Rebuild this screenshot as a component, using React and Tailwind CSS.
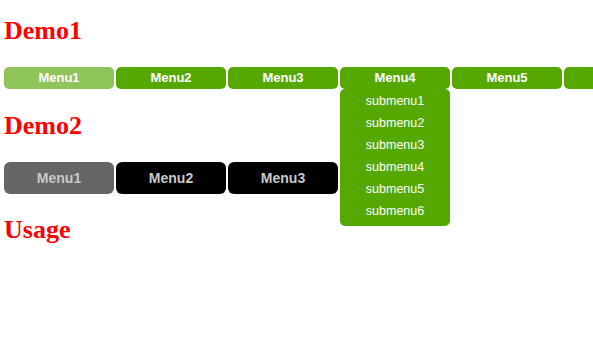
import React from 'react';

const demo1 = ['Menu1', 'Menu2', 'Menu3', 'Menu4', 'Menu5', 'Menu6'];
const demo2 = ['Menu1', 'Menu2', 'Menu3'];
const submenus = ['submenu1', 'submenu2', 'submenu3', 'submenu4', 'submenu5', 'submenu6'];

function Heading({ children, className = '' }) {
  return (
    <h2
      className={`text-[26px] leading-[29px] font-bold text-[#ff0000] ${className}`}
      style={{ fontFamily: '"Liberation Serif", "Times New Roman", serif' }}
    >
      {children}
    </h2>
  );
}

export default function App() {
  return (
    <div
      className="w-[593px] h-[340px] overflow-hidden bg-white px-[4px] pt-[16px]"
      style={{ fontFamily: '"Liberation Sans", Arial, sans-serif' }}
    >
      <Heading>Demo1</Heading>

      <ul className="flex gap-[2px] mt-[22px]">
        {demo1.map((m, i) => (
          <li key={m} className="relative shrink-0 w-[110px]">
            <a
              href="#"
              className={`flex h-[22px] items-center justify-center rounded-[5px] text-[13px] font-bold text-white ${
                i === 0 ? 'bg-[#8fc45b]' : 'bg-[#55a800]'
              }`}
            >
              {m}
            </a>
            {i === 3 && (
              <ul className="absolute left-0 top-[22px] z-10 w-[110px] rounded-[5px] bg-[#55a800] pt-[1px] pb-[4px]">
                {submenus.map((s) => (
                  <li key={s}>
                    <a
                      href="#"
                      className="flex h-[22px] items-center justify-center text-[12.5px] text-white"
                    >
                      {s}
                    </a>
                  </li>
                ))}
              </ul>
            )}
          </li>
        ))}
      </ul>

      <Heading className="mt-[22px]">Demo2</Heading>

      <ul className="flex gap-[2px] mt-[22px]">
        {demo2.map((m, i) => (
          <li key={m} className="shrink-0 w-[110px]">
            <a
              href="#"
              className={`flex h-[32px] items-center justify-center rounded-[6px] text-[14px] font-bold text-[#c8c8c8] ${
                i === 0 ? 'bg-[#666666]' : 'bg-black'
              }`}
            >
              {m}
            </a>
          </li>
        ))}
      </ul>

      <Heading className="mt-[21px]">Usage</Heading>
    </div>
  );
}
